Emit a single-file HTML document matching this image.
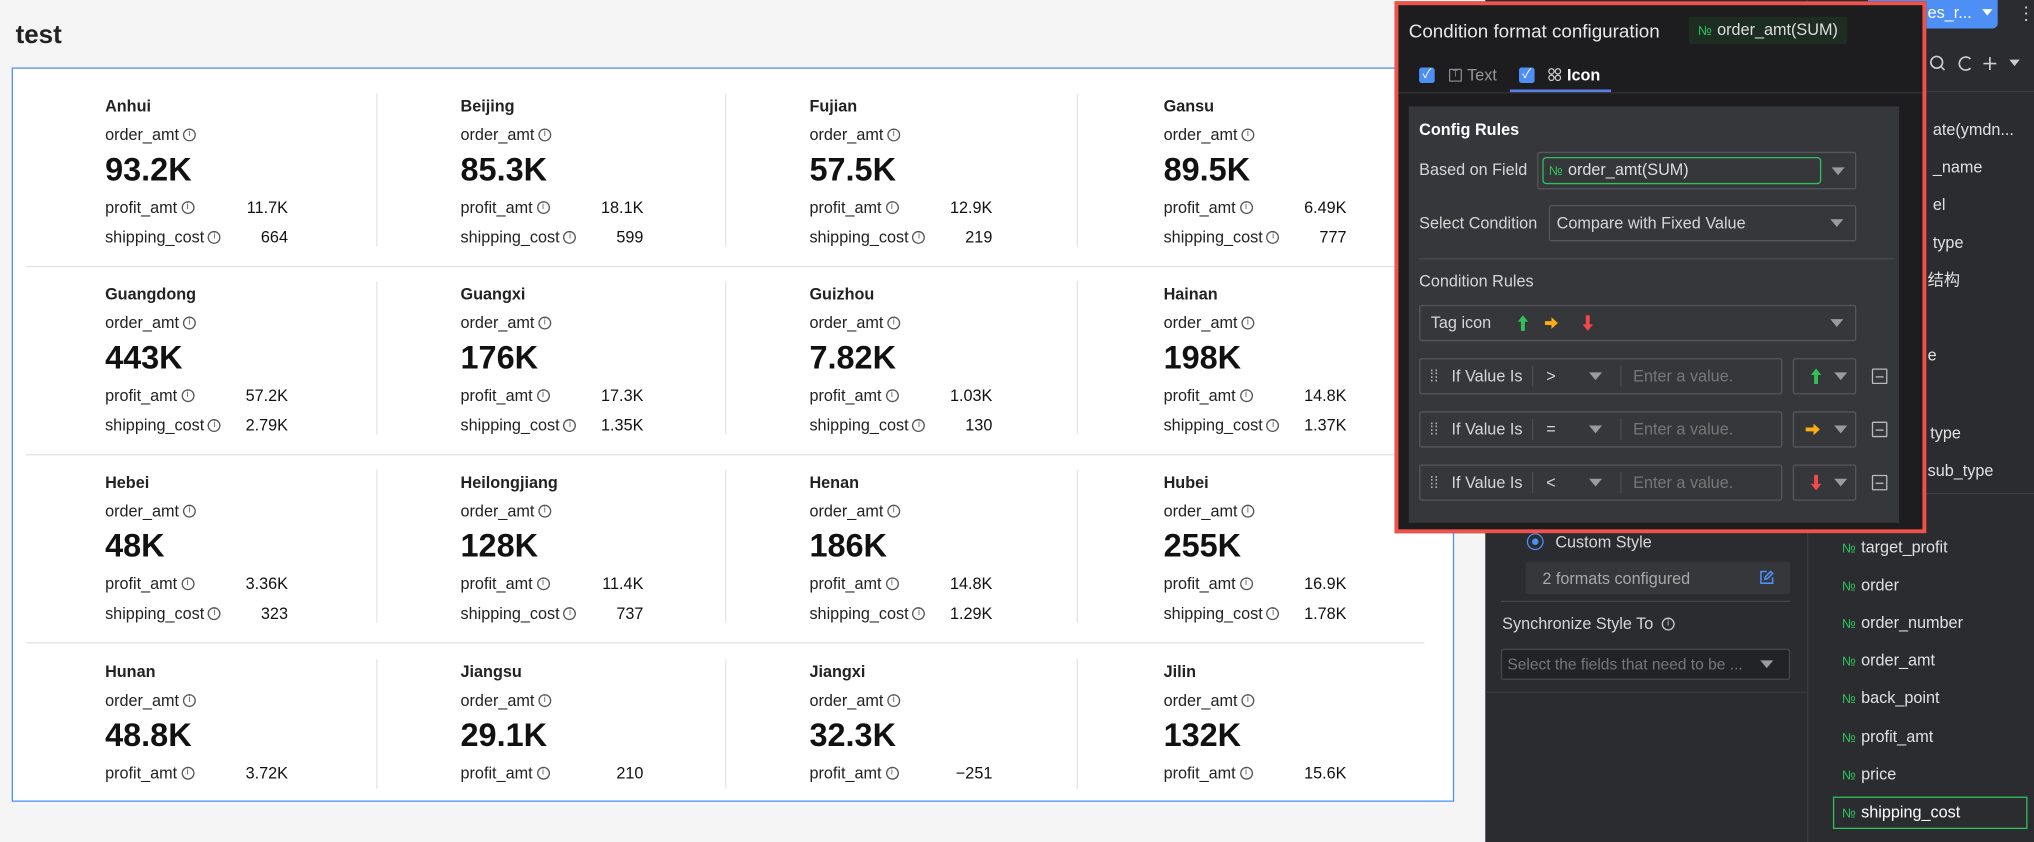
<!DOCTYPE html>
<html><head><meta charset="utf-8"><style>
*{box-sizing:border-box;margin:0;padding:0}
html,body{width:2034px;height:842px;overflow:hidden;background:#f5f5f5}
body{font-family:"Liberation Sans","Noto Sans CJK SC",sans-serif}
#w{position:absolute;left:0;top:0;width:1568px;height:649px;transform:scale(1.29719,1.29738);transform-origin:0 0;background:#f5f5f5}
.a{position:absolute;white-space:nowrap}
.card{position:absolute;left:9px;top:52px;width:1112px;height:566px;background:#fff;border:1px solid #4d8ff5}
.cell{position:absolute;width:160px;height:120px;font-size:12.5px;color:#222}
.cell .n{position:absolute;top:0;left:0;font-weight:bold;font-size:12.5px;line-height:16px}
.cell .l{position:absolute;left:0;line-height:16px;width:141px;white-space:nowrap}
.cell .l b{position:absolute;right:0;top:0;font-weight:normal;color:#111}
.cell .big{position:absolute;left:0;top:43px;font-size:25px;font-weight:bold;line-height:28px;color:#111}
.i{display:inline-block;width:10px;height:10px;border:1px solid #555;border-radius:50%;font-size:7px;line-height:8px;text-align:center;vertical-align:middle;margin-left:3px;margin-top:-2px;color:#555}
.vd{position:absolute;width:1px;background:#e6e6e6}
.hd{position:absolute;left:20px;width:1078px;height:1px;background:#e3e3e3}
.dk{position:absolute;background:#2b2c30}
.fl{position:absolute;left:1420px;font-size:12.5px;color:#e0e0e0;line-height:16px;white-space:nowrap}
.fl i{font-style:normal;color:#2fc25b;font-size:10px;margin-right:4px}
.pop{position:absolute;left:1075px;top:1px;width:410px;height:410px;border:3px solid #f0524a;background:#1d1d1f}
.sel{position:absolute;border:1px solid #56575c;border-radius:2px}
.car{position:absolute;width:0;height:0;border-left:5px solid transparent;border-right:5px solid transparent;border-top:6px solid #9a9ba0}
.t{position:absolute;color:#d6d6d6;font-size:12.5px;line-height:16px;white-space:nowrap}
.cb{position:absolute;width:12px;height:12px;background:#4d8ff5;border-radius:2px;color:#fff;font-size:10px;line-height:12px;text-align:center}
</style></head><body><div id="w">
<div class="a" style="left:12px;top:16px;font-size:20px;font-weight:bold;color:#222">test</div>
<div class="card"></div>
<div class="hd" style="top:205px"></div><div class="hd" style="top:350px"></div><div class="hd" style="top:495px"></div>
<div class="vd" style="left:290px;top:72px;height:118px"></div><div class="vd" style="left:559px;top:72px;height:118px"></div><div class="vd" style="left:830px;top:72px;height:118px"></div>
<div class="vd" style="left:290px;top:217px;height:118px"></div><div class="vd" style="left:559px;top:217px;height:118px"></div><div class="vd" style="left:830px;top:217px;height:118px"></div>
<div class="vd" style="left:290px;top:362px;height:118px"></div><div class="vd" style="left:559px;top:362px;height:118px"></div><div class="vd" style="left:830px;top:362px;height:118px"></div>
<div class="vd" style="left:290px;top:508px;height:100px"></div><div class="vd" style="left:559px;top:508px;height:100px"></div><div class="vd" style="left:830px;top:508px;height:100px"></div>

<div class="cell" style="left:81px;top:74px"><div class="n">Anhui</div><div class="l" style="top:22px">order_amt<span class="i">i</span></div><div class="big">93.2K</div><div class="l" style="top:78px">profit_amt<span class="i">i</span><b>11.7K</b></div><div class="l" style="top:101px">shipping_cost<span class="i">i</span><b>664</b></div></div>
<div class="cell" style="left:355px;top:74px"><div class="n">Beijing</div><div class="l" style="top:22px">order_amt<span class="i">i</span></div><div class="big">85.3K</div><div class="l" style="top:78px">profit_amt<span class="i">i</span><b>18.1K</b></div><div class="l" style="top:101px">shipping_cost<span class="i">i</span><b>599</b></div></div>
<div class="cell" style="left:624px;top:74px"><div class="n">Fujian</div><div class="l" style="top:22px">order_amt<span class="i">i</span></div><div class="big">57.5K</div><div class="l" style="top:78px">profit_amt<span class="i">i</span><b>12.9K</b></div><div class="l" style="top:101px">shipping_cost<span class="i">i</span><b>219</b></div></div>
<div class="cell" style="left:897px;top:74px"><div class="n">Gansu</div><div class="l" style="top:22px">order_amt<span class="i">i</span></div><div class="big">89.5K</div><div class="l" style="top:78px">profit_amt<span class="i">i</span><b>6.49K</b></div><div class="l" style="top:101px">shipping_cost<span class="i">i</span><b>777</b></div></div>

<div class="cell" style="left:81px;top:219px"><div class="n">Guangdong</div><div class="l" style="top:22px">order_amt<span class="i">i</span></div><div class="big">443K</div><div class="l" style="top:78px">profit_amt<span class="i">i</span><b>57.2K</b></div><div class="l" style="top:101px">shipping_cost<span class="i">i</span><b>2.79K</b></div></div>
<div class="cell" style="left:355px;top:219px"><div class="n">Guangxi</div><div class="l" style="top:22px">order_amt<span class="i">i</span></div><div class="big">176K</div><div class="l" style="top:78px">profit_amt<span class="i">i</span><b>17.3K</b></div><div class="l" style="top:101px">shipping_cost<span class="i">i</span><b>1.35K</b></div></div>
<div class="cell" style="left:624px;top:219px"><div class="n">Guizhou</div><div class="l" style="top:22px">order_amt<span class="i">i</span></div><div class="big">7.82K</div><div class="l" style="top:78px">profit_amt<span class="i">i</span><b>1.03K</b></div><div class="l" style="top:101px">shipping_cost<span class="i">i</span><b>130</b></div></div>
<div class="cell" style="left:897px;top:219px"><div class="n">Hainan</div><div class="l" style="top:22px">order_amt<span class="i">i</span></div><div class="big">198K</div><div class="l" style="top:78px">profit_amt<span class="i">i</span><b>14.8K</b></div><div class="l" style="top:101px">shipping_cost<span class="i">i</span><b>1.37K</b></div></div>

<div class="cell" style="left:81px;top:364px"><div class="n">Hebei</div><div class="l" style="top:22px">order_amt<span class="i">i</span></div><div class="big">48K</div><div class="l" style="top:78px">profit_amt<span class="i">i</span><b>3.36K</b></div><div class="l" style="top:101px">shipping_cost<span class="i">i</span><b>323</b></div></div>
<div class="cell" style="left:355px;top:364px"><div class="n">Heilongjiang</div><div class="l" style="top:22px">order_amt<span class="i">i</span></div><div class="big">128K</div><div class="l" style="top:78px">profit_amt<span class="i">i</span><b>11.4K</b></div><div class="l" style="top:101px">shipping_cost<span class="i">i</span><b>737</b></div></div>
<div class="cell" style="left:624px;top:364px"><div class="n">Henan</div><div class="l" style="top:22px">order_amt<span class="i">i</span></div><div class="big">186K</div><div class="l" style="top:78px">profit_amt<span class="i">i</span><b>14.8K</b></div><div class="l" style="top:101px">shipping_cost<span class="i">i</span><b>1.29K</b></div></div>
<div class="cell" style="left:897px;top:364px"><div class="n">Hubei</div><div class="l" style="top:22px">order_amt<span class="i">i</span></div><div class="big">255K</div><div class="l" style="top:78px">profit_amt<span class="i">i</span><b>16.9K</b></div><div class="l" style="top:101px">shipping_cost<span class="i">i</span><b>1.78K</b></div></div>

<div class="cell" style="left:81px;top:510px"><div class="n">Hunan</div><div class="l" style="top:22px">order_amt<span class="i">i</span></div><div class="big">48.8K</div><div class="l" style="top:78px">profit_amt<span class="i">i</span><b>3.72K</b></div></div>
<div class="cell" style="left:355px;top:510px"><div class="n">Jiangsu</div><div class="l" style="top:22px">order_amt<span class="i">i</span></div><div class="big">29.1K</div><div class="l" style="top:78px">profit_amt<span class="i">i</span><b>210</b></div></div>
<div class="cell" style="left:624px;top:510px"><div class="n">Jiangxi</div><div class="l" style="top:22px">order_amt<span class="i">i</span></div><div class="big">32.3K</div><div class="l" style="top:78px">profit_amt<span class="i">i</span><b>−251</b></div></div>
<div class="cell" style="left:897px;top:510px"><div class="n">Jilin</div><div class="l" style="top:22px">order_amt<span class="i">i</span></div><div class="big">132K</div><div class="l" style="top:78px">profit_amt<span class="i">i</span><b>15.6K</b></div></div>

<!-- dark panel -->
<div class="dk" style="left:1145px;top:0;width:423px;height:649px"></div>
<div class="a" style="left:1393px;top:0;width:1px;height:649px;background:#3a3b40"></div>
<div class="a" style="left:1145px;top:533px;width:248px;height:1px;background:#3a3b40"></div>
<div class="a" style="left:1394px;top:70px;width:174px;height:1px;background:#3a3b40"></div>
<div class="a" style="left:1394px;top:380px;width:174px;height:1px;background:#3a3b40"></div>
<div class="a" style="left:1440px;top:0;width:100px;height:22px;background:#4d8ff5;border-radius:0 0 4px 4px;color:#fff;font-size:12.5px;line-height:20px;padding-left:46px">es_r...<span style="display:inline-block;margin-left:8px;width:0;height:0;border-left:4px solid transparent;border-right:4px solid transparent;border-top:5px solid #fff;vertical-align:2px"></span></div>
<div class="a" style="left:1555px;top:2px;color:#ccc;font-size:14px">⋮</div>
<svg class="a" style="left:1486px;top:41px" width="80" height="16" viewBox="0 0 80 16" fill="none" stroke="#ccc" stroke-width="1.3"><circle cx="7" cy="7" r="4.5"/><path d="M10.5 10.5L13 13"/><path d="M33 4.5A5 5 0 1 0 33 11.5"/><path d="M48 3v10M43 8h10"/><path d="M63 5h8l-4 5z" fill="#ccc" stroke="none"/></svg>
<div class="fl" style="top:92px;left:1490px">ate(ymdn...</div>
<div class="fl" style="top:121px;left:1490px">_name</div>
<div class="fl" style="top:150px;left:1490px">el</div>
<div class="fl" style="top:179px;left:1490px">type</div>
<div class="fl" style="top:208px;left:1486px">结构</div>
<div class="fl" style="top:266px;left:1486px">e</div>
<div class="fl" style="top:326px;left:1488px">type</div>
<div class="fl" style="top:355px;left:1486px">sub_type</div>
<div class="fl" style="top:414px"><i>№</i>target_profit</div>
<div class="fl" style="top:443px"><i>№</i>order</div>
<div class="fl" style="top:472px"><i>№</i>order_number</div>
<div class="fl" style="top:501px"><i>№</i>order_amt</div>
<div class="fl" style="top:530px"><i>№</i>back_point</div>
<div class="fl" style="top:560px"><i>№</i>profit_amt</div>
<div class="fl" style="top:589px"><i>№</i>price</div>
<div class="a" style="left:1413px;top:614px;width:150px;height:25px;border:1px solid #2fc25b"></div>
<div class="fl" style="top:618px;color:#fff"><i>№</i>shipping_cost</div>

<div class="a" style="left:1177px;top:411px;width:13px;height:13px;border:1.5px solid #4d8ff5;border-radius:50%"></div>
<div class="a" style="left:1181px;top:415px;width:5px;height:5px;background:#4d8ff5;border-radius:50%"></div>
<div class="t" style="left:1199px;top:410px">Custom Style</div>
<div class="a" style="left:1176px;top:433px;width:204px;height:25px;background:#36373b;border-radius:2px"></div>
<div class="t" style="left:1189px;top:438px;color:#a8a8a8">2 formats configured</div>
<svg class="a" style="left:1356px;top:439px" width="12" height="12" viewBox="0 0 12 12" fill="none" stroke="#4d8ff5" stroke-width="1.2"><path d="M6 1.5H1.5v9h9V6"/><path d="M4.5 7.5L5 5.5l4-4 1.5 1.5-4 4z"/></svg>
<div class="a" style="left:1157px;top:463px;width:223px;height:1px;background:#45464b"></div>
<div class="t" style="left:1158px;top:473px">Synchronize Style To <span class="i" style="border-color:#ccc;color:#ccc">i</span></div>
<div class="a" style="left:1157px;top:500px;width:223px;height:24px;background:#222326;border:1px solid #46474c;border-radius:2px"></div>
<div class="t" style="left:1162px;top:504px;color:#777;font-size:12px">Select the fields that need to be ...</div>
<div class="car" style="left:1357px;top:509px"></div>

<!-- popup -->
<div class="pop"></div>
<div class="t" style="left:1086px;top:16px;font-size:14.5px;color:#e8e8e8;line-height:18px">Condition format configuration</div>
<div class="a" style="left:1302px;top:13px;width:122px;height:21px;background:#1e2d22;border-radius:2px;color:#ddd;font-size:12.5px;line-height:21px;padding-left:7px"><span style="color:#2fc25b;font-size:10px;margin-right:4px">№</span>order_amt(SUM)</div>
<div class="cb" style="left:1094px;top:52px">✓</div>
<div class="a" style="left:1117px;top:53px;width:10px;height:10px;border:1px solid #888;border-radius:1px;font-size:7px;color:#888;text-align:center;line-height:8px">T</div>
<div class="t" style="left:1131px;top:50px;color:#999">Text</div>
<div class="cb" style="left:1171px;top:52px">✓</div>
<svg class="a" style="left:1193px;top:52px" width="11" height="11" viewBox="0 0 11 11" fill="none" stroke="#ccc" stroke-width="1"><circle cx="3" cy="3" r="2"/><circle cx="8" cy="3" r="2"/><circle cx="3" cy="8" r="2"/><circle cx="8" cy="8" r="2"/></svg>
<div class="t" style="left:1208px;top:50px;color:#fff;font-weight:bold">Icon</div>
<div class="a" style="left:1078px;top:71px;width:404px;height:1px;background:#333"></div>
<div class="a" style="left:1164px;top:69px;width:78px;height:2px;background:#5b7ee8"></div>

<div class="a" style="left:1086px;top:82px;width:378px;height:321px;background:#36373b"></div>
<div class="t" style="left:1094px;top:92px;color:#fff;font-weight:bold">Config Rules</div>
<div class="t" style="left:1094px;top:123px">Based on Field</div>
<div class="sel" style="left:1185px;top:117px;width:246px;height:29px"></div>
<div class="a" style="left:1189px;top:121px;width:215px;height:21px;border:1px solid #2fc25b;border-radius:3px;color:#ddd;font-size:12.5px;line-height:19px;padding-left:4px"><span style="color:#2fc25b;font-size:10px;margin-right:4px">№</span>order_amt(SUM)</div>
<div class="car" style="left:1412px;top:129px"></div>
<div class="t" style="left:1094px;top:164px">Select Condition</div>
<div class="sel" style="left:1194px;top:158px;width:237px;height:28px"></div>
<div class="t" style="left:1200px;top:164px">Compare with Fixed Value</div>
<div class="car" style="left:1411px;top:169px"></div>
<div class="a" style="left:1094px;top:199px;width:366px;height:1px;background:#4a4b50"></div>
<div class="t" style="left:1094px;top:209px">Condition Rules</div>
<div class="sel" style="left:1094px;top:235px;width:337px;height:28px"></div>
<div class="t" style="left:1103px;top:241px">Tag icon</div>
<svg class="a" style="left:1167px;top:242px" width="70" height="14" viewBox="0 0 70 14"><path d="M7 1L3 6h2.5v7h3V6H11z" fill="#2fc25b"/><path d="M24 5.5h5V2.5L34 7l-5 4.5V8.5h-5z" fill="#faad14"/><path d="M57 13l4-5h-2.5V1h-3v7H53z" fill="#f5484a"/></svg>
<div class="car" style="left:1411px;top:246px"></div>

<!-- rule rows -->
<div class="sel" style="left:1094px;top:276px;width:280px;height:28px"></div>
<div class="t" style="left:1102px;top:282px;color:#aaa">⁞⁞</div>
<div class="t" style="left:1119px;top:282px">If Value Is</div>
<div class="a" style="left:1181px;top:282px;width:1px;height:16px;background:#4a4b50"></div>
<div class="t" style="left:1192px;top:282px">&gt;</div>
<div class="car" style="left:1225px;top:287px"></div>
<div class="a" style="left:1249px;top:282px;width:1px;height:16px;background:#4a4b50"></div>
<div class="t" style="left:1259px;top:282px;color:#777">Enter a value.</div>
<div class="sel" style="left:1382px;top:276px;width:49px;height:28px"></div>
<svg class="a" style="left:1394px;top:283px" width="12" height="14" viewBox="0 0 12 14"><path d="M6 1L2 6h2.5v7h3V6H10z" fill="#2fc25b"/></svg>
<div class="car" style="left:1414px;top:287px"></div>
<div class="a" style="left:1443px;top:284px;width:12px;height:12px;border:1.2px solid #bbb;border-radius:1px"></div><div class="a" style="left:1446px;top:289.5px;width:6px;height:1.2px;background:#bbb"></div>

<div class="sel" style="left:1094px;top:317px;width:280px;height:28px"></div>
<div class="t" style="left:1102px;top:323px;color:#aaa">⁞⁞</div>
<div class="t" style="left:1119px;top:323px">If Value Is</div>
<div class="a" style="left:1181px;top:323px;width:1px;height:16px;background:#4a4b50"></div>
<div class="t" style="left:1192px;top:323px">=</div>
<div class="car" style="left:1225px;top:328px"></div>
<div class="a" style="left:1249px;top:323px;width:1px;height:16px;background:#4a4b50"></div>
<div class="t" style="left:1259px;top:323px;color:#777">Enter a value.</div>
<div class="sel" style="left:1382px;top:317px;width:49px;height:28px"></div>
<svg class="a" style="left:1391px;top:325px" width="14" height="12" viewBox="0 0 14 12"><path d="M1 4.5h6V1.5L12 6l-5 4.5V7.5H1z" fill="#faad14"/></svg>
<div class="car" style="left:1414px;top:328px"></div>
<div class="a" style="left:1443px;top:325px;width:12px;height:12px;border:1.2px solid #bbb;border-radius:1px"></div><div class="a" style="left:1446px;top:330.5px;width:6px;height:1.2px;background:#bbb"></div>

<div class="sel" style="left:1094px;top:358px;width:280px;height:28px"></div>
<div class="t" style="left:1102px;top:364px;color:#aaa">⁞⁞</div>
<div class="t" style="left:1119px;top:364px">If Value Is</div>
<div class="a" style="left:1181px;top:364px;width:1px;height:16px;background:#4a4b50"></div>
<div class="t" style="left:1192px;top:364px">&lt;</div>
<div class="car" style="left:1225px;top:369px"></div>
<div class="a" style="left:1249px;top:364px;width:1px;height:16px;background:#4a4b50"></div>
<div class="t" style="left:1259px;top:364px;color:#777">Enter a value.</div>
<div class="sel" style="left:1382px;top:358px;width:49px;height:28px"></div>
<svg class="a" style="left:1394px;top:365px" width="12" height="14" viewBox="0 0 12 14"><path d="M6 13l4-5H7.5V1h-3v7H2z" fill="#f5484a"/></svg>
<div class="car" style="left:1414px;top:369px"></div>
<div class="a" style="left:1443px;top:366px;width:12px;height:12px;border:1.2px solid #bbb;border-radius:1px"></div><div class="a" style="left:1446px;top:371.5px;width:6px;height:1.2px;background:#bbb"></div>
</div></body></html>
